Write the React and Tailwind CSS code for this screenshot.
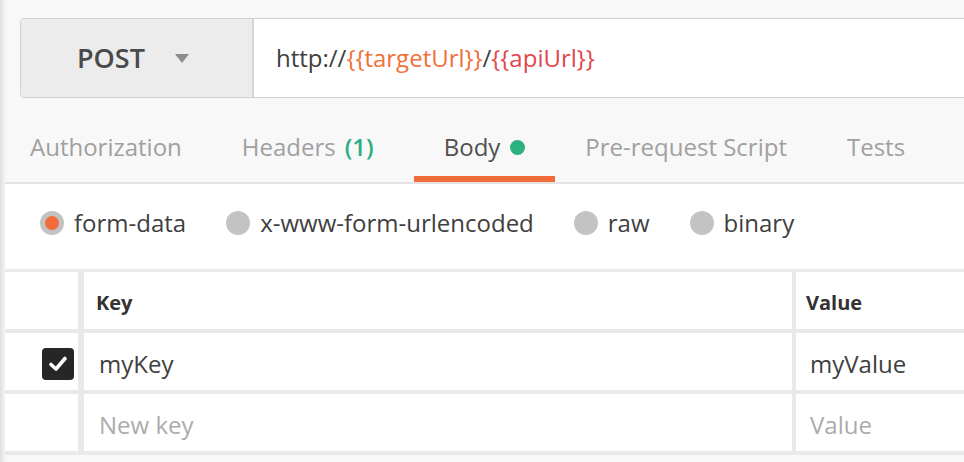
import React from 'react';

const tabs = [
  { label: 'Authorization', cls: 'pl-[25px] pr-[30px]' },
  { label: 'Headers', count: '(1)', cls: 'pl-[30px] pr-[40px]' },
  { label: 'Body', active: true, cls: 'px-[30px]' },
  { label: 'Pre-request Script', cls: 'px-[30px]' },
  { label: 'Tests', cls: 'px-[30px]' },
];

const modes = ['form-data', 'x-www-form-urlencoded', 'raw', 'binary'];

function Checkbox() {
  return (
    <div className="w-[32px] h-[32px] rounded-[4px] bg-[#262626] flex items-center justify-center">
      <svg width="22" height="22" viewBox="0 0 22 22" fill="none">
        <path d="M4 11.5 L9 16 L18 5.5" stroke="#fff" strokeWidth="3.6" strokeLinecap="round" strokeLinejoin="round" />
      </svg>
    </div>
  );
}

function Row({ check, keyText, valueText, header, placeholder }) {
  const textCls = header
    ? 'text-[20px] font-bold text-[#333]'
    : placeholder
    ? 'text-[24px] text-[#ababab]'
    : 'text-[24px] text-[#404040]';
  return (
    <div className="flex h-[61px] border-b-4 border-[#e9e9e9]">
      <div className="w-[79px] shrink-0 flex items-center justify-end pr-[4px] pt-[4px] border-r-[6px] border-[#e9e9e9]">
        {check && <Checkbox />}
      </div>
      <div className={`w-[712px] shrink-0 flex items-center pt-[4px] border-r-4 border-[#e9e9e9] ${header ? 'pl-[12px]' : 'pl-[15px]'} ${textCls}`}>
        {keyText}
      </div>
      <div className={`flex-1 flex items-center pt-[4px] ${header ? 'pl-[10px]' : 'pl-[14px]'} ${textCls}`}>
        {valueText}
      </div>
    </div>
  );
}

export default function App() {
  return (
    <div className="flex w-[964px] h-[462px] overflow-hidden bg-[#f8f8f8] font-['Open_Sans',sans-serif]">
      <div className="w-[5px] shrink-0 bg-gradient-to-r from-[#e0e0e0] to-[#f3f3f3]" />
      <div className="flex-1 flex flex-col min-w-0">
        {/* request line */}
        <div className="pt-[18px] pl-[15px] shrink-0">
          <div className="flex h-[80px] w-[970px] border border-[#d2d2d2] rounded-[4px] overflow-hidden">
            <div className="w-[233px] shrink-0 bg-[#ececec] flex items-center pl-[56px] border-r-2 border-[#d6d6d6]">
              <span className="text-[27px] font-semibold text-[#4a4a4a]">POST</span>
              <span className="ml-[30px] w-0 h-0 border-l-[7px] border-r-[7px] border-t-[9px] border-l-transparent border-r-transparent border-t-[#8c8c8c]" />
            </div>
            <div className="flex-1 bg-white flex items-center pl-[22px] text-[24px] text-[#404040]">
              http://<span className="text-[#f0703a]">{'{{targetUrl}}'}</span>/<span className="text-[#e2474b]">{'{{apiUrl}}'}</span>
            </div>
          </div>
        </div>

        {/* tabs */}
        <div className="flex h-[86px] shrink-0 border-b-2 border-[#e4e4e4]">
          {tabs.map((t) => (
            <div key={t.label} className={`flex flex-col ${t.cls}`}>
              <div className={`mt-[33px] h-[32px] flex items-center text-[24px] whitespace-nowrap ${t.active ? 'text-[#505050]' : 'text-[#a0a0a0]'}`}>
                {t.label}
                {t.count && <span className="ml-[9px] text-[#2bae80] font-semibold">{t.count}</span>}
                {t.active && <span className="ml-[10px] w-[15px] h-[15px] rounded-full bg-[#2bb07f]" />}
              </div>
              <div className={`mt-auto h-[6px] -mx-[30px] ${t.active ? 'bg-[#f26b3a]' : ''}`} />
            </div>
          ))}
        </div>

        {/* body type */}
        <div className="bg-white shrink-0 pt-[27px] pb-[34px] pl-[35px] flex items-center">
          {modes.map((m, i) => (
            <div key={m} className={`flex items-center ${i > 0 ? 'ml-[40px]' : ''}`}>
              {i === 0 ? (
                <span className="w-[24px] h-[24px] rounded-full border-[5px] border-[#c3c3c3] bg-[#f26b3a]" />
              ) : (
                <span className="w-[24px] h-[24px] rounded-full bg-[#c3c3c3]" />
              )}
              <span className="ml-[10px] text-[24px] leading-[24px] text-[#404040]">{m}</span>
            </div>
          ))}
        </div>

        <div className="bg-white border-t-[3px] border-[#ebebeb] shrink-0">
          <Row header keyText="Key" valueText="Value" />
          <Row check keyText="myKey" valueText="myValue" />
          <Row placeholder keyText="New key" valueText="Value" />
        </div>
      </div>
    </div>
  );
}
